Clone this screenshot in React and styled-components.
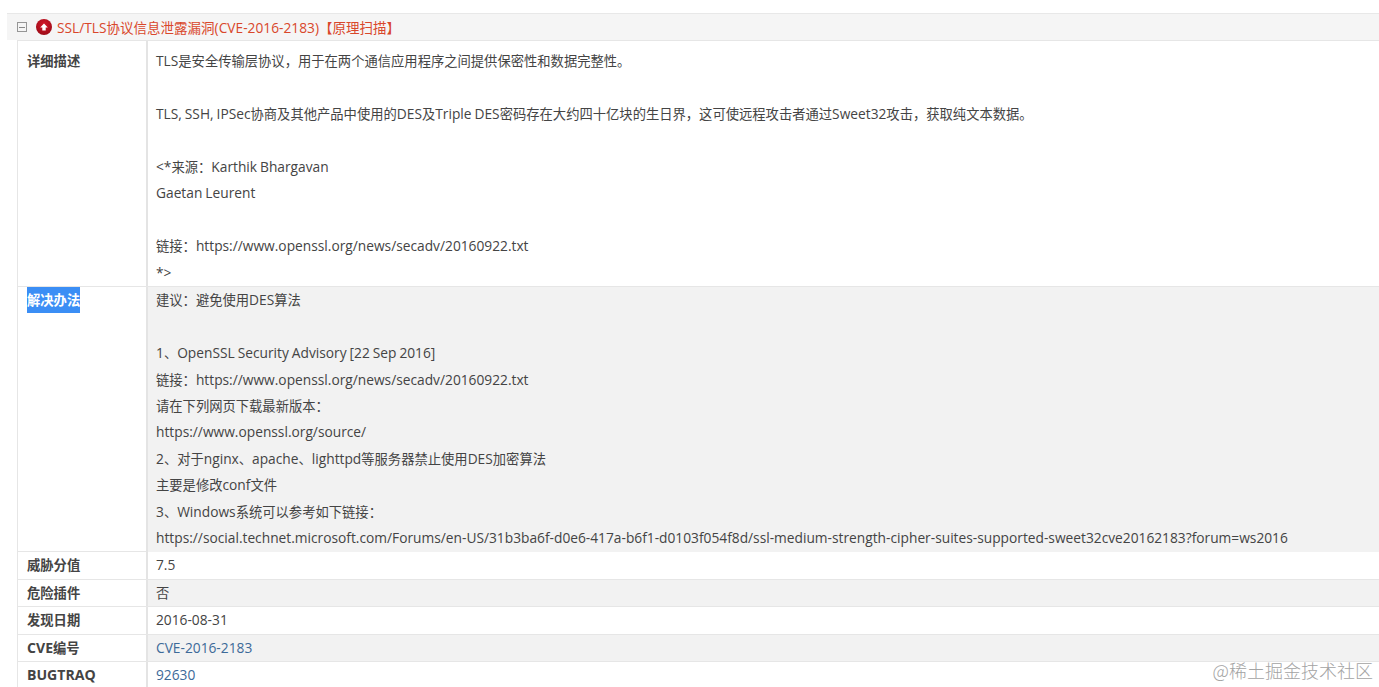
import React from 'react';
import styled, { createGlobalStyle } from 'styled-components';

const Global = createGlobalStyle`
  html, body { margin: 0; padding: 0; background: #fff; overflow: hidden; }
  body { font-family: "Open Sans", "Noto Sans CJK SC", sans-serif; font-size: 13.3px; color: #444; }
`;
const Page = styled.div`
  width: 1379px; height: 687px; overflow: hidden; position: relative;
  padding: 13px 0 0 7px; box-sizing: border-box;
`;
const Header = styled.div`
  height: 27px; background: #f5f5f5; border-top: 1px solid #e8e8e8;
  display: flex; align-items: center; padding: 0 0 1px 10px; box-sizing: border-box;
  color: #d9472b; white-space: nowrap; font-size: 13.5px;
`;
const Toggle = styled.svg`width: 10px; height: 10px; margin-right: 9px; flex: none;`;
const Risk = styled.svg`width: 16px; height: 16px; margin: 1px 5px 0 0; flex: none;`;
const Table = styled.div`
  margin-left: 10px; border-top: 1px solid #e6e6e6; border-left: 1px solid #e6e6e6;
`;
const Row = styled.div`
  display: grid; grid-template-columns: 128px 1fr;
  border-bottom: 1px solid #e6e6e6;
  height: ${p => p.$h}px; box-sizing: border-box;
`;
const Label = styled.div`
  padding: ${p => p.$top || 0}px 0 0 9px; font-weight: 700; line-height: 26.45px;
  color: #444; white-space: nowrap;
`;
const Mark = styled.span`
  display: inline-block; background: #3b8ef5; color: #fff; line-height: 26px;
`;
const Cell = styled.div`
  border-left: 2px solid #e4e4e4; padding: ${p => p.$top || 0.3}px 0 0 8px; white-space: nowrap;
  background: ${p => (p.$alt ? '#f2f2f2' : '#fff')};
`;
const Line = styled.div`height: 26.45px; line-height: 26.45px; color: #444;`;
const Latin = styled.span`font-size: 13.76px; word-spacing: -0.6px;`;
const BoldLatin = styled.span`font-size: 14.1px;`;
const Ref = styled.a`color: #3d6a99; text-decoration: none;`;
const Watermark = styled.div`
  position: absolute; right: 6px; bottom: 6px; color: #a3a3a3; font-size: 18px;
  font-family: "Noto Sans CJK SC", sans-serif; font-weight: 300; line-height: 22px;
`;

const Mixed = ({ text }) =>
  text.split(/([\u0020-\u024f]+)/).map((part, i) =>
    i % 2 ? <Latin key={i}>{part}</Latin> : part
  );

const desc = [
  'TLS是安全传输层协议，用于在两个通信应用程序之间提供保密性和数据完整性。', '',
  'TLS, SSH, IPSec协商及其他产品中使用的DES及Triple DES密码存在大约四十亿块的生日界，这可使远程攻击者通过Sweet32攻击，获取纯文本数据。', '',
  '<*来源：Karthik Bhargavan', 'Gaetan Leurent', '',
  '链接：https://www.openssl.org/news/secadv/20160922.txt', '*>',
];
const fix = [
  '建议：避免使用DES算法', '',
  '1、OpenSSL Security Advisory [22 Sep 2016]',
  '链接：https://www.openssl.org/news/secadv/20160922.txt',
  '请在下列网页下载最新版本：',
  'https://www.openssl.org/source/',
  '2、对于nginx、apache、lighttpd等服务器禁止使用DES加密算法',
  '主要是修改conf文件',
  '3、Windows系统可以参考如下链接：',
  'https://social.technet.microsoft.com/Forums/en-US/31b3ba6f-d0e6-417a-b6f1-d0103f054f8d/ssl-medium-strength-cipher-suites-supported-sweet32cve20162183?forum=ws2016',
];
const lines = arr => arr.map((t, i) => <Line key={i}><Mixed text={t || '\u00a0'} /></Line>);

export default function App() {
  return (
    <Page>
      <Global />
      <Header>
        <Toggle viewBox="0 0 10 10">
          <rect x="0.5" y="0.5" width="9" height="9" fill="#f5f5f5" stroke="#969696" />
          <path d="M2 5.5h6" stroke="#888" />
        </Toggle>
        <Risk viewBox="0 0 16 16">
          <defs>
            <radialGradient id="riskFill" cx="50%" cy="35%" r="70%">
              <stop offset="0%" stopColor="#d5182a" />
              <stop offset="100%" stopColor="#980a16" />
            </radialGradient>
          </defs>
          <circle cx="8" cy="8" r="8" fill="url(#riskFill)" />
          <path d="M8 4.6 11.8 8.4H9.7v3H6.3v-3H4.2z" fill="#fff" />
        </Risk>
        <span><Mixed text="SSL/TLS协议信息泄露漏洞(CVE-2016-2183)【原理扫描】" /></span>
      </Header>
      <Table>
        <Row $h={246}>
          <Label $top={7}>详细描述</Label>
          <Cell $top={7.3}>{lines(desc)}</Cell>
        </Row>
        <Row $h={265}>
          <Label><Mark>解决办法</Mark></Label>
          <Cell $alt>{lines(fix)}</Cell>
        </Row>
        <Row $h={27.5}>
          <Label>威胁分值</Label>
          <Cell><Line><Mixed text="7.5" /></Line></Cell>
        </Row>
        <Row $h={27.5}>
          <Label>危险插件</Label>
          <Cell $alt><Line>否</Line></Cell>
        </Row>
        <Row $h={27.5}>
          <Label>发现日期</Label>
          <Cell><Line><Mixed text="2016-08-31" /></Line></Cell>
        </Row>
        <Row $h={27.5}>
          <Label><BoldLatin>CVE</BoldLatin>编号</Label>
          <Cell $alt><Line><Ref><Mixed text="CVE-2016-2183" /></Ref></Line></Cell>
        </Row>
        <Row $h={27.5}>
          <Label><BoldLatin>BUGTRAQ</BoldLatin></Label>
          <Cell><Line><Ref><Mixed text="92630" /></Ref></Line></Cell>
        </Row>
      </Table>
      <Watermark>@稀土掘金技术社区</Watermark>
    </Page>
  );
}
